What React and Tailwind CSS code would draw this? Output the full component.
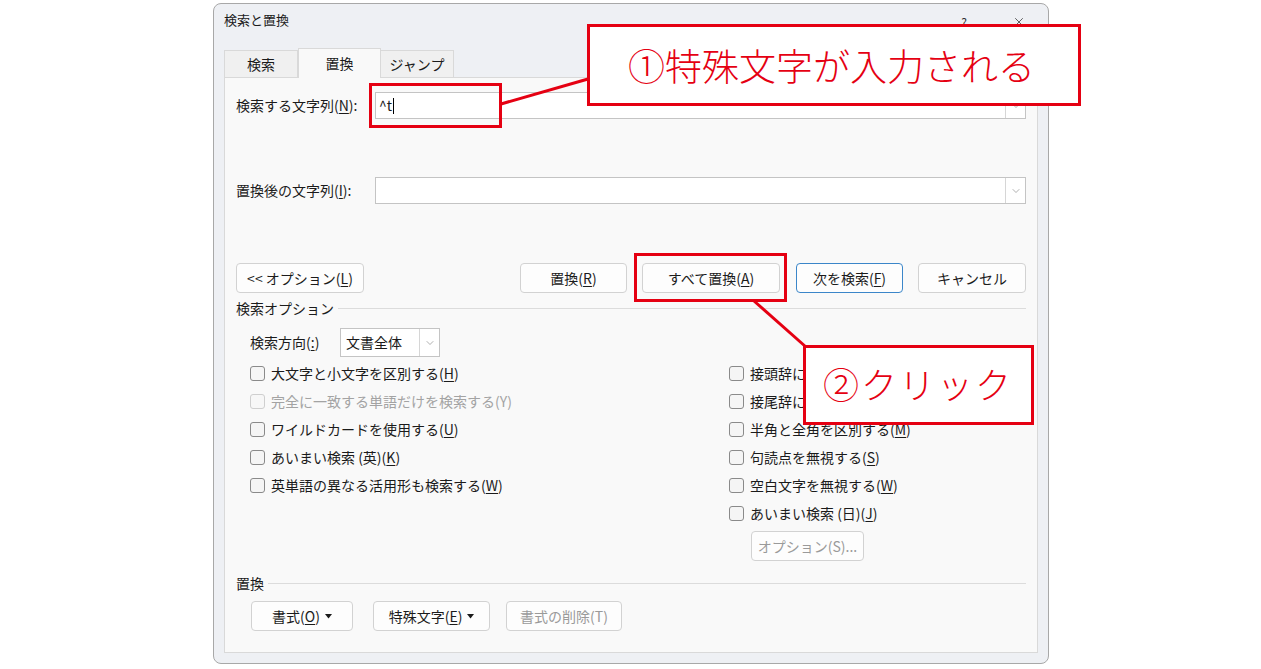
import React from 'react';
import { ChevronDown, X } from 'lucide-react';

const U = ({ children }) => <span className="underline underline-offset-2">{children}</span>;

const Btn = ({ children, className = '', disabled = false, primary = false }) => (
  <div
    className={`flex items-center justify-center h-[30px] rounded-[4px] border text-[14px] ${
      primary ? 'border-[#3b86c9] bg-[#fdfdfd]' : 'border-[#d2d2d2] bg-[#fdfdfd]'
    } ${disabled ? 'text-[#9a9a9a]' : 'text-[#1b1b1b]'} ${className}`}
  >
    {children}
  </div>
);

const Check = ({ children, disabled = false }) => (
  <div className={`flex items-center h-[28px] text-[14px] ${disabled ? 'text-[#a3a3a3]' : 'text-[#1b1b1b]'}`}>
    <div
      className={`w-[15px] h-[15px] rounded-[3px] border mr-[6px] ${
        disabled ? 'border-[#cfcfcf] bg-[#f7f7f7]' : 'border-[#8a8a8a] bg-[#f5f5f5]'
      }`}
    />
    <span>{children}</span>
  </div>
);

const Combo = ({ children }) => (
  <div className="flex-1 flex h-[27px] border border-[#c4c4c4] bg-white">
    <div className="flex-1 flex items-center pl-[3px] text-[14px]">{children}</div>
    <div className="w-[20px] border-l border-[#d6d6d6] flex items-center justify-center">
      <ChevronDown size={12} strokeWidth={1.2} className="text-[#7a7a7a]" />
    </div>
  </div>
);

const Section = ({ title }) => (
  <div className="flex items-center h-[16px] text-[14px] text-[#1b1b1b]">
    <span className="mr-[4px]">{title}</span>
    <div className="flex-1 border-t border-[#dcdcdc]" />
  </div>
);

const Tri = () => (
  <svg width="7" height="5" viewBox="0 0 7 5" className="ml-[5px]">
    <polygon points="0,0 7,0 3.5,4.5" fill="#1b1b1b" />
  </svg>
);

export default function App() {
  return (
    <div
      className="relative w-[1261px] h-[669px] bg-white overflow-hidden pt-[3px]"
      style={{ fontFamily: '"Noto Sans CJK JP", "Noto Sans", sans-serif' }}
    >
      {/* dialog */}
      <div className="ml-[213px] w-[836px] h-[661px] rounded-[8px] border border-[#a8a8a8] bg-[#eef0f4] flex flex-col">
        {/* title bar */}
        <div className="h-[44px] flex items-start pt-[6px] pl-[10px] pr-[22px] text-[13px] text-[#1b1b1b]">
          <span>検索と置換</span>
          <div className="ml-auto flex items-center gap-[45px] pt-[3px]">
            <span className="text-[12px] text-[#333]">?</span>
            <X size={14} strokeWidth={1.2} className="text-[#222]" />
          </div>
        </div>

        {/* tabs */}
        <div className="flex items-end h-[29px] ml-[10px] text-[14px] text-[#1b1b1b] relative z-10">
          <div className="w-[74px] h-[27px] border border-b-0 border-[#d9d9d9] bg-[#f0f0f0] flex items-center justify-center">検索</div>
          <div className="w-[83px] h-[30px] border border-b-0 border-[#d9d9d9] bg-[#f9f9f9] flex items-center justify-center -mb-[1px]">置換</div>
          <div className="w-[73px] h-[27px] border border-b-0 border-l-0 border-[#d9d9d9] bg-[#f0f0f0] flex items-center justify-center">ジャンプ</div>
        </div>

        {/* tab panel */}
        <div className="ml-[10px] w-[814px] h-[576px] border border-[#d9d9d9] bg-[#f9f9f9] px-[11px] pt-[14px] flex flex-col text-[#1b1b1b]">
          <div className="flex items-center h-[27px] text-[14px]">
            <span className="w-[139px]">検索する文字列(<U>N</U>):</span>
            <Combo>
              <span>^t</span>
              <span className="inline-block w-[1px] h-[16px] bg-black ml-[1px]" />
            </Combo>
          </div>

          <div className="flex items-center h-[27px] text-[14px] mt-[58px]">
            <span className="w-[139px]">置換後の文字列(<U>I</U>):</span>
            <Combo />
          </div>

          <div className="flex items-center justify-between mt-[59px]">
            <Btn className="w-[128px]">&lt;&lt; オプション(<U>L</U>)</Btn>
            <div className="flex">
              <Btn className="w-[107px]">置換(<U>R</U>)</Btn>
              <Btn className="w-[138px] ml-[15px]">すべて置換(<U>A</U>)</Btn>
              <Btn className="w-[107px] ml-[16px]" primary>次を検索(<U>F</U>)</Btn>
              <Btn className="w-[108px] ml-[15px]">キャンセル</Btn>
            </div>
          </div>

          <div className="mt-[7px]">
            <Section title="検索オプション" />
          </div>

          <div className="flex items-center ml-[14px] mt-[12px] h-[29px] text-[14px]">
            <span className="w-[90px]">検索方向(<U>:</U>)</span>
            <div className="w-[100px] h-[29px] flex border border-[#c4c4c4] bg-white">
              <div className="flex-1 flex items-center pl-[5px]">文書全体</div>
              <div className="w-[20px] border-l border-[#d6d6d6] flex items-center justify-center">
                <ChevronDown size={12} strokeWidth={1.2} className="text-[#7a7a7a]" />
              </div>
            </div>
          </div>

          <div className="flex mt-[2px] ml-[14px]">
            <div className="w-[479px] flex flex-col">
              <Check>大文字と小文字を区別する(<U>H</U>)</Check>
              <Check disabled>完全に一致する単語だけを検索する(Y)</Check>
              <Check>ワイルドカードを使用する(<U>U</U>)</Check>
              <Check>あいまい検索 (英)(<U>K</U>)</Check>
              <Check>英単語の異なる活用形も検索する(<U>W</U>)</Check>
            </div>
            <div className="flex flex-col">
              <Check>接頭辞に一致する(<U>X</U>)</Check>
              <Check>接尾辞に一致する(<U>T</U>)</Check>
              <Check>半角と全角を区別する(<U>M</U>)</Check>
              <Check>句読点を無視する(<U>S</U>)</Check>
              <Check>空白文字を無視する(<U>W</U>)</Check>
              <Check>あいまい検索 (日)(<U>J</U>)</Check>
              <Btn className="w-[113px] h-[29px] ml-[22px] mt-[4px]" disabled>オプション(S)...</Btn>
            </div>
          </div>

          <div className="mt-[14px]">
            <Section title="置換" />
          </div>

          <div className="flex ml-[15px] mt-[10px]">
            <Btn className="w-[102px]">書式(<U>O</U>)<Tri /></Btn>
            <Btn className="w-[117px] ml-[20px]">特殊文字(<U>E</U>)<Tri /></Btn>
            <Btn className="w-[116px] ml-[16px]" disabled>書式の削除(T)</Btn>
          </div>
        </div>
      </div>

      {/* annotations */}
      <svg className="absolute inset-0 pointer-events-none" width="1261" height="669">
        <line x1="501" y1="104" x2="588" y2="79" stroke="#e50012" strokeWidth="3" />
        <line x1="754" y1="301" x2="806" y2="347" stroke="#e50012" strokeWidth="3" />
      </svg>
      <div className="absolute left-[369px] top-[83px] w-[133px] h-[45px] border-[3px] border-[#e50012]" />
      <div className="absolute left-[634px] top-[253px] w-[153px] h-[49px] border-[3px] border-[#e50012]" />
      <div className="absolute left-[587px] top-[24px] w-[494px] h-[82px] border-[3px] border-[#e50012] bg-white flex items-center pl-[38px] text-[37px] font-light leading-none text-[#e50012]">
        ①特殊文字が入力される
      </div>
      <div className="absolute left-[803px] top-[345px] w-[231px] h-[80px] border-[3px] border-[#e50012] bg-white flex items-center pl-[17px] pb-[4px] text-[36px] font-light leading-none text-[#e50012] tracking-[2px]">
        ②クリック
      </div>
    </div>
  );
}
